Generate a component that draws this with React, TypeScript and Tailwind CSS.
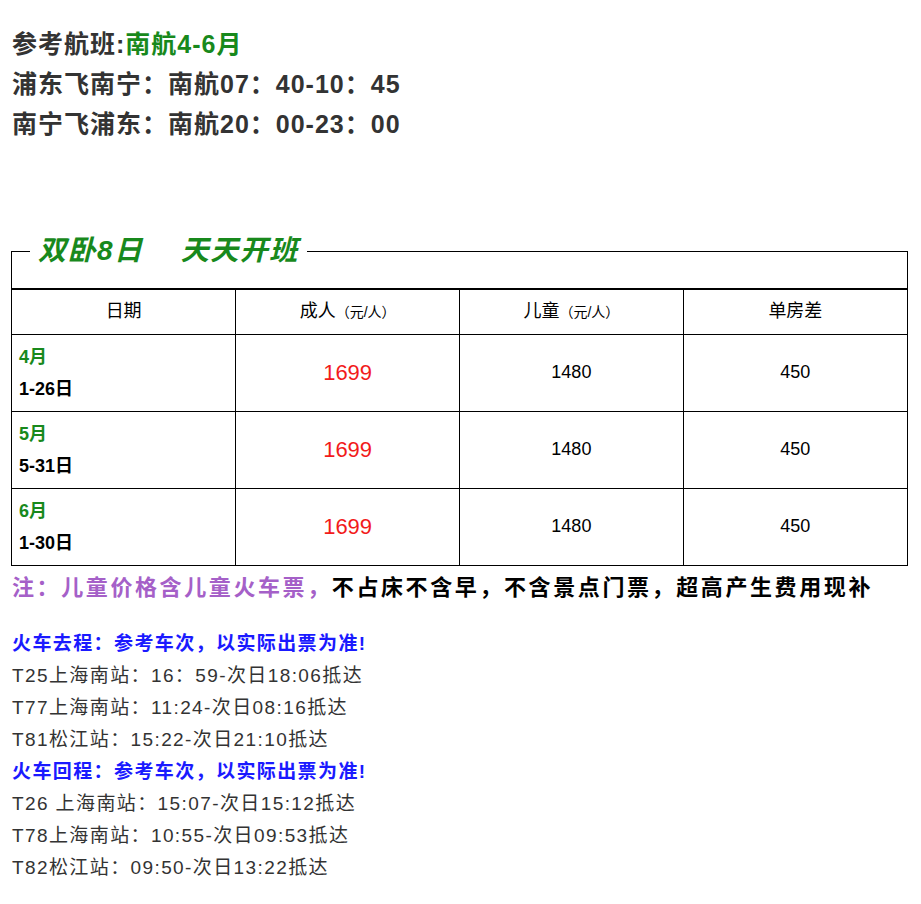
export default function App() {
  const f = { fontFamily: '"Liberation Sans","Noto Sans CJK SC",sans-serif' };
  const rows = [
    ["4月", "1-26日"],
    ["5月", "5-31日"],
    ["6月", "1-30日"],
  ];
  return (
    <div style={f} className="px-[12px] pt-[24px] pb-4 text-[#333] w-[921px]">
      <div className="text-[25px] font-bold leading-[40px] tracking-[1px]">
        <div>参考航班:<span className="text-[#18891c]">南航4-6月</span></div>
        <div>浦东飞南宁：南航07：40-10：45</div>
        <div>南宁飞浦东：南航20：00-23：00</div>
      </div>
      <fieldset className="mt-[88px] border border-black border-b-0 w-[897px] -ml-[1px] px-0 pb-0 pt-0">
        <legend className="ml-[18px] px-2 text-[28px] font-bold italic text-[#18891c] leading-[38px] tracking-[1.5px]">
          双卧8日&nbsp;&nbsp;&nbsp;&nbsp;天天开班
        </legend>
        <div className="h-[18px]" />
        <table className="w-full border-collapse text-black text-[18px] table-fixed">
          <tbody>
            <tr className="h-[45px] border-t-2 border-black">
              <td className="border-r border-black text-center">日期</td>
              <td className="border-r border-black text-center">成人<span className="text-[14px]">（元/人）</span></td>
              <td className="border-r border-black text-center">儿童<span className="text-[14px]">（元/人）</span></td>
              <td className="text-center">单房差</td>
            </tr>
            {rows.map(([m, d]) => (
              <tr key={m} className="h-[77px] border-t border-b border-black">
                <td className="border-r border-black pl-[7px] font-bold leading-[32px]">
                  <div className="text-[#18891c]">{m}</div>
                  <div>{d}</div>
                </td>
                <td className="border-r border-black text-center text-[22px] text-[#f21b1b]">1699</td>
                <td className="border-r border-black text-center">1480</td>
                <td className="text-center">450</td>
              </tr>
            ))}
          </tbody>
        </table>
      </fieldset>
      <div className="text-[22px] font-bold leading-[44px] whitespace-nowrap text-black tracking-[2.6px]">
        <span className="text-[#a560c8]">注：儿童价格含儿童火车票，</span>不占床不含早，不含景点门票，超高产生费用现补
      </div>
      <div className="mt-[18px] text-[19px] leading-[32px] tracking-[1.4px]">
        <div className="font-bold text-[#1a1aff]">火车去程：参考车次，以实际出票为准!</div>
        <div>T25上海南站：16：59-次日18:06抵达</div>
        <div>T77上海南站：11:24-次日08:16抵达</div>
        <div>T81松江站：15:22-次日21:10抵达</div>
        <div className="font-bold text-[#1a1aff]">火车回程：参考车次，以实际出票为准!</div>
        <div>T26 上海南站：15:07-次日15:12抵达</div>
        <div>T78上海南站：10:55-次日09:53抵达</div>
        <div>T82松江站：09:50-次日13:22抵达</div>
      </div>
    </div>
  );
}
